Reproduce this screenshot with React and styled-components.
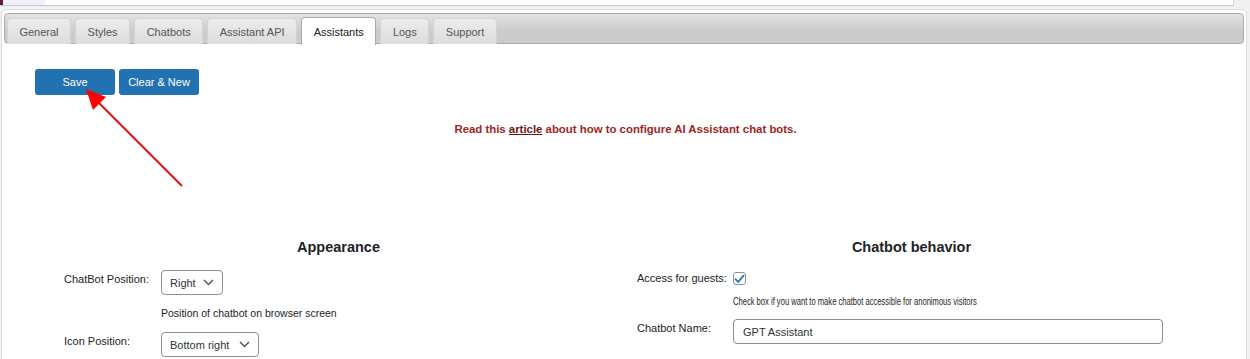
import styled, { createGlobalStyle } from "styled-components";

const GlobalStyle = createGlobalStyle`
    body {
        margin: 0;
        background: #f1f1f1;
        font-family: "Liberation Sans", Arial, sans-serif;
        color: #1d2327;
    }
`

const tabs = ["General", "Styles", "Chatbots", "Assistant API", "Assistants", "Logs", "Support"]

export default function App() {
    return (
        <Page>
            <GlobalStyle />
            <TopStrip>
                <AdminMark />
                <MenuStub />
            </TopStrip>
            <Panel>
                <TabBar>
                    {tabs.map((t) => (
                        <Tab key={t} $active={t === "Assistants"}>{t}</Tab>
                    ))}
                </TabBar>
                <Content>
                    <ButtonRow>
                        <Button>Save</Button>
                        <Button>Clear &amp; New</Button>
                    </ButtonRow>
                    <Notice>
                        Read this <a href="#">article</a> about how to configure AI Assistant chat bots.
                    </Notice>
                    <Columns>
                        <Column>
                            <Heading>Appearance</Heading>
                            <FieldRow $top={14}>
                                <Label>ChatBot Position:</Label>
                                <Select $w={62}>Right<Chevron /></Select>
                            </FieldRow>
                            <Help>Position of chatbot on browser screen</Help>
                            <FieldRow $top={13}>
                                <Label>Icon Position:</Label>
                                <Select $w={98}>Bottom right<Chevron /></Select>
                            </FieldRow>
                        </Column>
                        <Column>
                            <Heading>Chatbot behavior</Heading>
                            <FieldRow $top={16}>
                                <Label $pad={0} $w={96}>Access for guests:</Label>
                                <CheckBox>
                                    <svg width="11" height="10" viewBox="0 0 11 10">
                                        <path d="M1.5 5.2 L4.2 8 L9.6 1.6" fill="none" stroke="#2271b1" strokeWidth="1.8" strokeLinecap="round" strokeLinejoin="round" />
                                    </svg>
                                </CheckBox>
                            </FieldRow>
                            <Help $top={10} $squeeze={0.66}>Check box if you want to make chatbot accessible for anonimous visitors</Help>
                            <FieldRow $top={12}>
                                <Label $pad={3} $w={96}>Chatbot Name:</Label>
                                <TextInput>GPT Assistant</TextInput>
                            </FieldRow>
                        </Column>
                    </Columns>
                    <Arrow width="112" height="112" viewBox="0 0 112 112">
                        <line x1="106" y1="106" x2="22" y2="22" stroke="#e01010" strokeWidth="2" />
                        <polygon points="10,9 30,17 17,30" fill="#ff0000" />
                    </Arrow>
                </Content>
            </Panel>
        </Page>
    )
}

function Chevron() {
    return (
        <ChevronIcon width="11" height="7" viewBox="0 0 11 7">
            <path d="M1 1 L5.5 5.5 L10 1" fill="none" stroke="#50575e" strokeWidth="1.5" />
        </ChevronIcon>
    )
}

const Page = styled.div`
    width: 1250px;
    height: 359px;
    overflow: hidden;
`

const TopStrip = styled.div`
    width: 1233px;
    height: 5px;
    background: #ffffff;
    border-bottom: 1px solid #c8c8c8;
    border-right: 1px solid #dcdcdc;
    display: flex;
`

const AdminMark = styled.div`
    width: 3px;
    background: #6b1838;
`

const MenuStub = styled.div`
    width: 42px;
    background: #f2f0f8;
`

const Panel = styled.div`
    margin: 3px 0 0 1px;
    width: 1246px;
    height: 400px;
    box-sizing: border-box;
    background: #ffffff;
    border: 1px solid #dddddd;
    border-radius: 4px;
    padding: 3px 2px;
`

const TabBar = styled.div`
    display: flex;
    gap: 4.3px;
    height: 31px;
    box-sizing: border-box;
    padding: 4px 2px 0;
    border: 1px solid #aaaaaa;
    border-radius: 4px;
    background: linear-gradient(#e3e3e3, #cbcbcb 60%, #cbcbcb);
`

const Tab = styled.div`
    height: ${(p) => (p.$active ? "28px" : "26px")};
    margin-top: ${(p) => (p.$active ? "-1px" : "0")};
    box-sizing: border-box;
    padding: 0 11.4px;
    display: flex;
    align-items: center;
    font-size: 11px;
    color: ${(p) => (p.$active ? "#212121" : "#555555")};
    background: ${(p) => (p.$active ? "#ffffff" : "linear-gradient(#ececec, #dcdcdc)")};
    border: 1px solid ${(p) => (p.$active ? "#aaaaaa" : "#d3d3d3")};
    border-bottom: none;
    border-radius: 4px 4px 0 0;
`

const Content = styled.div`
    position: relative;
    padding: 25px 0 0 31px;
`

const ButtonRow = styled.div`
    display: flex;
    gap: 4px;
`

const Button = styled.div`
    width: 80px;
    height: 26px;
    display: flex;
    align-items: center;
    justify-content: center;
    background: #2271b1;
    color: #ffffff;
    font-size: 11px;
    border-radius: 3px;
`

const Notice = styled.div`
    margin: 28px 0 0 -31px;
    padding-left: 3px;
    text-align: center;
    font-size: 11.4px;
    font-weight: bold;
    color: #a0241f;

    a {
        color: #6b1414;
        text-decoration: underline;
    }
`

const Columns = styled.div`
    margin: 104px 0 0 17px;
    display: grid;
    grid-template-columns: 573px 573px;
`

const Column = styled.div`
    display: flex;
    flex-direction: column;
    padding-left: 12px;
`

const Heading = styled.div`
    margin-left: -12px;
    text-align: center;
    font-size: 14.5px;
    font-weight: bold;
    color: #1d2327;
    line-height: 17px;
`

const FieldRow = styled.div`
    display: flex;
    align-items: flex-start;
    margin-top: ${(p) => p.$top ?? 23}px;
`

const Label = styled.div`
    width: ${(p) => p.$w ?? 97}px;
    flex-shrink: 0;
    font-size: 11px;
    padding-top: ${(p) => p.$pad ?? 3}px;
    color: #1d2327;
`

const Select = styled.div`
    width: ${(p) => p.$w}px;
    height: 25px;
    box-sizing: border-box;
    border: 1px solid #8c8f94;
    border-radius: 4px;
    display: flex;
    align-items: center;
    justify-content: space-between;
    padding: 0 8px;
    font-size: 11px;
    color: #2c3338;
`

const ChevronIcon = styled.svg`
    flex-shrink: 0;
`

const Help = styled.div`
    margin-top: ${(p) => p.$top ?? 12}px;
    padding-left: 97px;
    font-size: 10.5px;
    color: #1d2327;
    white-space: nowrap;

    ${(p) => p.$squeeze && `
        margin-left: 96px;
        padding-left: 0;
        font-size: 11.5px;
        transform: scaleX(${p.$squeeze});
        transform-origin: left center;
    `}
`

const CheckBox = styled.div`
    width: 13px;
    height: 13px;
    box-sizing: border-box;
    border: 1px solid #8c8f94;
    border-radius: 3px;
    display: flex;
    align-items: center;
    justify-content: center;
`

const TextInput = styled.div`
    width: 430px;
    height: 25px;
    box-sizing: border-box;
    border: 1px solid #8c8f94;
    border-radius: 4px;
    padding: 0 9px;
    display: flex;
    align-items: center;
    font-size: 11px;
    color: #2c3338;
`

const Arrow = styled.svg`
    position: absolute;
    left: 72px;
    top: 36px;
`
